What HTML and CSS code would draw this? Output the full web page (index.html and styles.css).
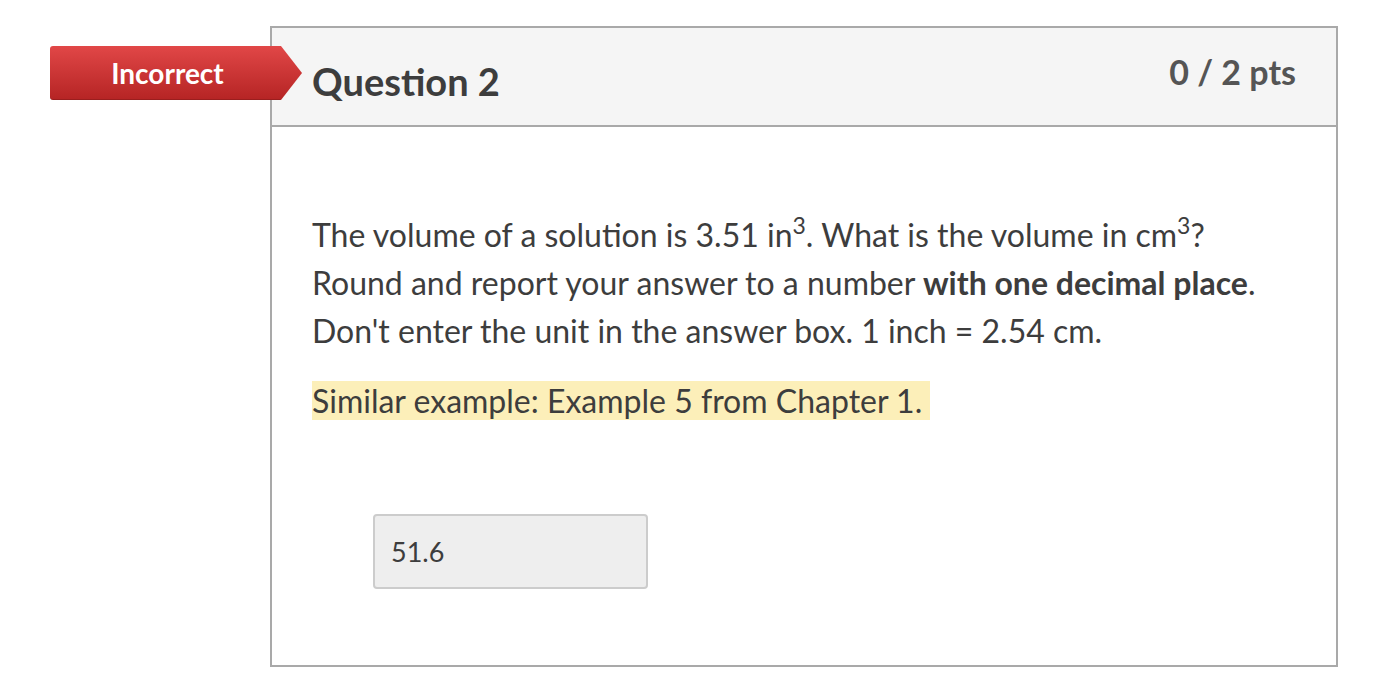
FILE: index.html
```html
<!DOCTYPE html>
<html>
<head>
<meta charset="utf-8">
<link rel="stylesheet" href="styles.css">
</head>
<body>
<div class="page">
  <div class="question">
    <div class="badge">
      <span class="badge-label">Incorrect</span>
      <svg class="badge-arrow" width="23" height="54" viewBox="0 0 23 54"><polygon points="0,0 1,0 22,27 1,54 0,54" fill="url(#g)"/><defs><linearGradient id="g" x1="0" y1="0" x2="0" y2="1"><stop offset="0" stop-color="#e14747"/><stop offset="1" stop-color="#b52424"/></linearGradient></defs></svg>
    </div>
    <div class="q-header">
      <h2 class="q-title">Question 2</h2>
      <div class="q-points">0 / 2 pts</div>
    </div>
    <div class="q-body">
      <p class="q-text">The volume of a solution is 3.51 in<sup>3</sup>. What is the volume in cm<sup>3</sup>? Round and report your answer to a number <strong>with one decimal place</strong>. Don't enter the unit in the answer box. 1 inch = 2.54 cm.</p>
      <p class="q-hint"><span class="hl">Similar example: Example 5 from Chapter 1.&nbsp;</span></p>
      <div class="answer">
        <div class="answer-box">51.6</div>
      </div>
    </div>
  </div>
</div>
</body>
</html>
```
FILE: styles.css
```css
html, body {
  margin: 0;
  padding: 0;
  background: #fff;
  font-family: Lato, "Open Sans", sans-serif;
  color: #3d3d3d;
}
.page {
  padding: 26px 0 0 270px;
}
.question {
  position: relative;
  width: 1064px;
  height: 637px;
  border: 2px solid #a9a9a9;
  box-sizing: content-box;
}
.badge {
  position: absolute;
  left: -222px;
  top: 18px;
  display: flex;
  align-items: stretch;
  height: 54px;
}
.badge-label {
  width: 231px;
  box-sizing: border-box;
  background: linear-gradient(#e14747, #b52424);
  border-radius: 3px 0 0 3px;
  color: #fff;
  font-weight: 700;
  font-size: 28px;
  display: flex;
  align-items: center;
  justify-content: center;
  padding-left: 4px;
  box-shadow: inset 0 -1px 0 rgba(0,0,0,0.15);
}
.badge-arrow {
  display: block;
  margin-left: -1px;
}
.q-header {
  background: #f5f5f5;
  border-bottom: 2px solid #a9a9a9;
  height: 99px;
  box-sizing: border-box;
  display: flex;
  justify-content: space-between;
  align-items: flex-start;
  padding: 0 40px 0 40px;
}
.q-title {
  margin: 31px 0 0 0;
  font-size: 38px;
  font-weight: 700;
  line-height: 44px;
  color: #3d3d3d;
}
.q-points {
  margin-top: 24px;
  font-size: 34px;
  font-weight: 700;
  line-height: 40px;
  color: #555;
}
.q-body {
  padding: 84px 40px 0 40px;
}
.q-text {
  margin: 0;
  font-size: 32px;
  line-height: 48px;
}
.q-text sup {
  font-size: 23px;
  line-height: 0;
  vertical-align: 13px;
}
.q-text strong {
  font-weight: 700;
}
.q-hint {
  margin: 27px 0 0 0;
  font-size: 32px;
  line-height: 38px;
}
.hl {
  background: #fcefb9;
}
.answer {
  padding: 94px 0 0 61px;
}
.answer-box {
  width: 275px;
  height: 75px;
  box-sizing: border-box;
  background: #eee;
  border: 2px solid #ccc;
  border-radius: 4px;
  font-size: 27px;
  color: #3d3d3d;
  padding: 0 0 0 16px;
  display: flex;
  align-items: center;
}
```
